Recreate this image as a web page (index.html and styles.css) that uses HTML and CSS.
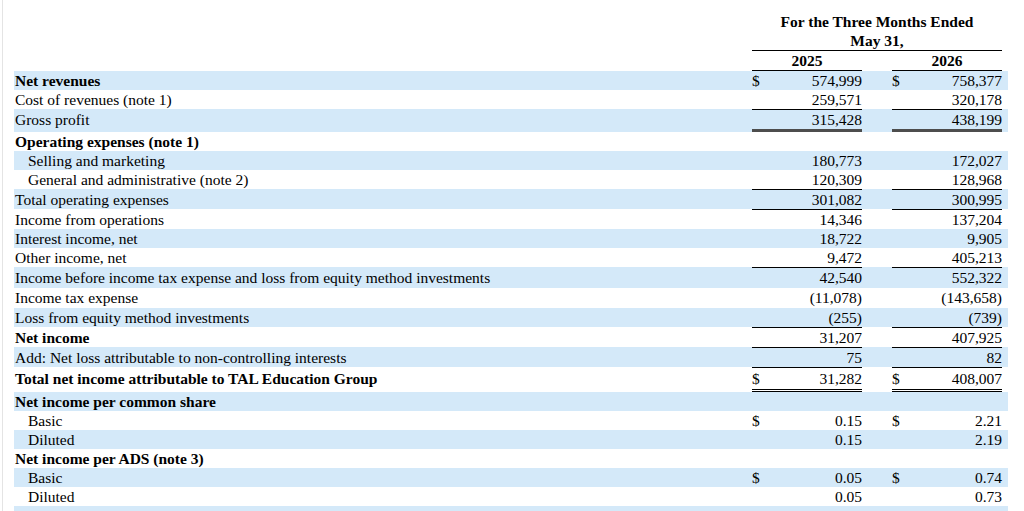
FILE: index.html
```html
<!DOCTYPE html>
<html>
<head>
<meta charset="utf-8">
<link rel="stylesheet" href="styles.css">
</head>
<body>
<div class="page">
  <div class="head">
    <div class="head-title">
      <div>For the Three Months Ended</div>
      <div class="bb">May 31,</div>
    </div>
  </div>
  <div class="row years">
    <div class="lab"></div>
    <div class="yr bb">2025</div>
    <div class="gap"></div>
    <div class="yr bb">2026</div>
    <div></div>
  </div>

  <div class="row sh"><div class="lab b">Net revenues</div><div class="v"><span>$</span><span>574,999</span></div><div class="gap"></div><div class="v"><span>$</span><span>758,377</span></div><div></div></div>
  <div class="row"><div class="lab">Cost of revenues (note 1)</div><div class="v"><span></span><span>259,571</span></div><div class="gap"></div><div class="v"><span></span><span>320,178</span></div><div></div></div>
  <div class="row sh bt thick"><div class="lab">Gross profit</div><div class="v"><span></span><span>315,428</span></div><div class="gap"></div><div class="v"><span></span><span>438,199</span></div><div></div></div>
  <div class="row"><div class="lab b">Operating expenses (note 1)</div><div class="v"></div><div class="gap"></div><div class="v"></div><div></div></div>
  <div class="row sh"><div class="lab ind">Selling and marketing</div><div class="v"><span></span><span>180,773</span></div><div class="gap"></div><div class="v"><span></span><span>172,027</span></div><div></div></div>
  <div class="row"><div class="lab ind">General and administrative (note 2)</div><div class="v"><span></span><span>120,309</span></div><div class="gap"></div><div class="v"><span></span><span>128,968</span></div><div></div></div>
  <div class="row sh bt"><div class="lab">Total operating expenses</div><div class="v"><span></span><span>301,082</span></div><div class="gap"></div><div class="v"><span></span><span>300,995</span></div><div></div></div>
  <div class="row bt"><div class="lab">Income from operations</div><div class="v"><span></span><span>14,346</span></div><div class="gap"></div><div class="v"><span></span><span>137,204</span></div><div></div></div>
  <div class="row sh"><div class="lab">Interest income, net</div><div class="v"><span></span><span>18,722</span></div><div class="gap"></div><div class="v"><span></span><span>9,905</span></div><div></div></div>
  <div class="row"><div class="lab">Other income, net</div><div class="v"><span></span><span>9,472</span></div><div class="gap"></div><div class="v"><span></span><span>405,213</span></div><div></div></div>
  <div class="row sh bt tall"><div class="lab">Income before income tax expense and loss from equity method investments</div><div class="v"><span></span><span>42,540</span></div><div class="gap"></div><div class="v"><span></span><span>552,322</span></div><div></div></div>
  <div class="row tall"><div class="lab">Income tax expense</div><div class="v"><span></span><span>(11,078)</span></div><div class="gap"></div><div class="v"><span></span><span>(143,658)</span></div><div></div></div>
  <div class="row sh"><div class="lab">Loss from equity method investments</div><div class="v"><span></span><span>(255)</span></div><div class="gap"></div><div class="v"><span></span><span>(739)</span></div><div></div></div>
  <div class="row bt"><div class="lab b">Net income</div><div class="v"><span></span><span>31,207</span></div><div class="gap"></div><div class="v"><span></span><span>407,925</span></div><div></div></div>
  <div class="row sh bt"><div class="lab">Add: Net loss attributable to non-controlling interests</div><div class="v"><span></span><span>75</span></div><div class="gap"></div><div class="v"><span></span><span>82</span></div><div></div></div>
  <div class="row bt dbl"><div class="lab b">Total net income attributable to TAL Education Group</div><div class="v"><span>$</span><span>31,282</span></div><div class="gap"></div><div class="v"><span>$</span><span>408,007</span></div><div></div></div>
  <div class="row sh"><div class="lab b">Net income per common share</div><div class="v"></div><div class="gap"></div><div class="v"></div><div></div></div>
  <div class="row"><div class="lab ind">Basic</div><div class="v"><span>$</span><span>0.15</span></div><div class="gap"></div><div class="v"><span>$</span><span>2.21</span></div><div></div></div>
  <div class="row sh"><div class="lab ind">Diluted</div><div class="v"><span></span><span>0.15</span></div><div class="gap"></div><div class="v"><span></span><span>2.19</span></div><div></div></div>
  <div class="row"><div class="lab b">Net income per ADS (note 3)</div><div class="v"></div><div class="gap"></div><div class="v"></div><div></div></div>
  <div class="row sh"><div class="lab ind">Basic</div><div class="v"><span>$</span><span>0.05</span></div><div class="gap"></div><div class="v"><span>$</span><span>0.74</span></div><div></div></div>
  <div class="row"><div class="lab ind">Diluted</div><div class="v"><span></span><span>0.05</span></div><div class="gap"></div><div class="v"><span></span><span>0.73</span></div><div></div></div>
  <div class="row sh"><div class="lab">&nbsp;</div><div class="v"></div><div class="gap"></div><div class="v"></div><div></div></div>
</div>
</body>
</html>
```

FILE: styles.css
```css
html, body {
  margin: 0;
  padding: 0;
  background: #fff;
}
body {
  font-family: "Liberation Serif", "Times New Roman", serif;
  font-size: 15.5px;
  color: #000;
  overflow: hidden;
  height: 511px;
}
.page {
  margin-left: 2px;
  padding-left: 11px;
  padding-top: 12px;
  border-left: 1px solid #e4e4e4;
  height: 511px;
  box-sizing: border-box;
  width: 1006px;
}
.head {
  display: flex;
  padding-left: 738px;
}
.head-title {
  width: 250px;
  text-align: center;
  font-weight: bold;
  line-height: 19px;
}
.bb {
  border-bottom: 1px solid #000;
}
.row {
  display: grid;
  grid-template-columns: 738px 110px 30px 110px 4px;
  line-height: 19px;
  white-space: nowrap;
}
.row.tall {
  line-height: 20px;
}
.years .yr {
  text-align: center;
  font-weight: bold;
}
.row.sh {
  background: #d4e9f9;
}
.lab {
  padding-left: 1px;
}
.lab.b {
  font-weight: bold;
}
.lab.ind {
  padding-left: 14px;
}
.v {
  display: flex;
  justify-content: space-between;
}
.bt > * {
  border-top: 1px solid transparent;
}
.bt > .v {
  border-top-color: #000;
}
.thick > * {
  border-bottom: 3px solid transparent;
}
.thick > .v {
  border-bottom-color: #4d4d4d;
}
.dbl > * {
  padding-top: 1px;
  padding-bottom: 1px;
  border-bottom: 3px double transparent;
}
.dbl > .v {
  border-bottom-color: #000;
}
```
